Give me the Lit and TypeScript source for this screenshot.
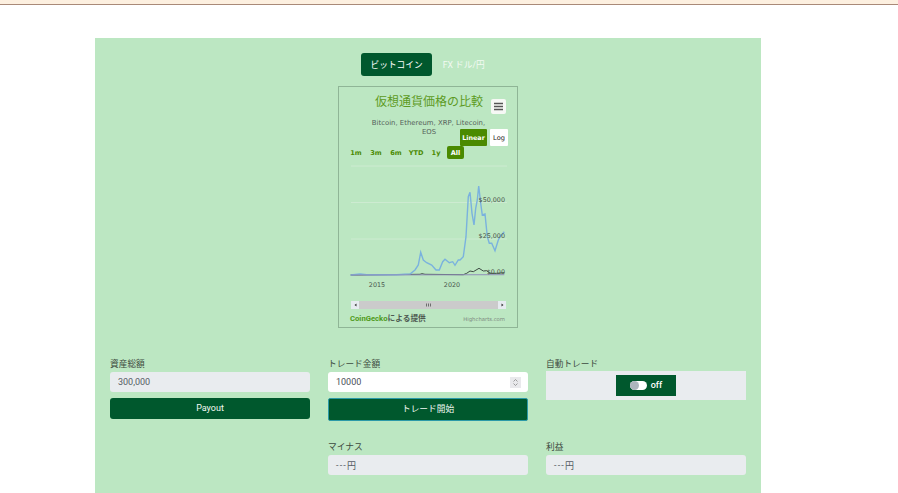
import { LitElement, html, css, svg, unsafeCSS } from "lit";
import { customElement } from "lit/decorators.js";

const JP = unsafeCSS(`"Roboto","Noto Sans CJK JP",sans-serif`);
const z = (p: number[][]) => p.map(([x, y]) => `${(x / 3 + 330 - 339).toFixed(1)},${(y / 3 + 160 - 87).toFixed(1)}`).join(" ");
const blue = z([[62,345],[90,342],[110,344],[200,344],[240,342],[255,330],[265,315],[272,277],[280,300],[290,308],[305,315],[318,330],[328,330],[338,305],[345,298],[358,308],[368,305],[375,316],[385,300],[390,300],[400,290],[408,230],[415,110],[420,97],[426,160],[432,195],[437,145],[442,120],[446,78],[452,130],[457,165],[465,162],[472,230],[478,250],[485,250],[495,272],[505,240],[510,230],[523,215]]);
const dark = z([[62,345],[270,343],[276,341],[285,343],[400,344],[410,340],[420,333],[430,335],[447,325],[460,333],[470,332],[480,340],[500,340],[523,338]]);
const purple = z([[62,345],[523,344]]);

@customElement("app-root")
export class AppRoot extends LitElement {
  static styles = css`
    :host { display: block; height: 493px; overflow: hidden; background: #fff; font-family: ${JP}; color: #3c4a40; }
    .top { height: 4px; background: #fdf0e0; border-bottom: 1px solid #a98a78; }
    .panel { margin: 33px 0 0 95px; width: 666px; height: 455px; background: #bce7c2; padding: 15px 15px 0; box-sizing: border-box; display: flex; flex-direction: column; align-items: center; }
    .tabs { align-self: flex-start; margin-left: 251px; display: flex; align-items: center; gap: 1px; height: 23px; font-size: 8.7px; color: #f2faf3; }
    .tab { padding: 0 9.5px; height: 23px; display: flex; align-items: center; border-radius: 3px; }
    .tab.on { background: #00582d; color: #fff; }
    .chart { display: block; width: 180px; height: 242px; margin-top: 10px; box-sizing: border-box; border: 1px solid #8fb596; flex: none; }
    .chart text { font-family: ${JP}; }
    .chart text.hc { font-family: "DejaVu Sans", ${JP}; }
    .grid { align-self: stretch; display: grid; grid-template-columns: repeat(3, 200px); column-gap: 18px; margin-top: 30px; font-size: 9px; }
    .col { display: flex; flex-direction: column; }
    .r2 { margin-top: 20px; }
    label { display: block; line-height: 12px; height: 12px; margin-bottom: 2px; font-size: 8.7px; color: #3c4a40; }
    .field { height: 20px; border-radius: 3px; background: #e9ecef; display: flex; align-items: center; padding: 0 8px; font-size: 9px; color: #555d64; box-sizing: border-box; }
    .field.white { background: #fff; justify-content: space-between; padding-right: 7px; color: #4a5058; }
    .blank { letter-spacing: 1.2px; }
    .spin { width: 11px; height: 11px; background: #e9e9ec; display: block; }
    .btn { margin-top: 6px; background: #00582d; color: #f2faf3; border-radius: 3px; height: 21px; display: flex; align-items: center; justify-content: center; font-size: 9px; box-sizing: border-box; padding-bottom: 2px; }
    .btn.focus { height: 23px; border: 1px solid #2c9aa8; border-radius: 2px; padding-bottom: 2px; font-size: 8.7px; }
    .auto { height: 29px; margin-top: -1px; background: #e9ecef; display: flex; align-items: center; justify-content: center; }
    .switch { width: 60px; height: 21px; background: #00582d; color: #fff; display: flex; align-items: center; justify-content: center; gap: 4px; font-size: 9px; font-weight: 500; padding-bottom: 1px; box-sizing: border-box; }
    .tog { width: 17px; height: 9px; border-radius: 5px; background: #fff; display: flex; align-items: center; }
    .knob { width: 9px; height: 9px; border-radius: 50%; background: #adb5bd; }
  `;

  private chart() {
    const lbl = (x: number, t: string, on = false) => svg`<text class="hc" x=${x} y="68" font-size="6.6" font-weight="700" text-anchor="middle" fill=${on ? "#fff" : "#4a8a00"}>${t}</text>`;
    const ax = (y: number, t: string) => svg`<text class="hc" x="166" y=${y} font-size="6.4" text-anchor="end" fill="#4a554d">${t}</text>`;
    return svg`<svg class="chart" viewBox="0 0 178 240" xmlns="http://www.w3.org/2000/svg">
      <text x="90" y="19" font-size="12" text-anchor="middle" fill="#5d9a22">仮想通貨価格の比較</text>
      <rect x="152" y="12" width="15" height="15" rx="2" fill="#f6f8f5"/>
      <path d="M155 16.500h9M155 19.500h9M155 22.500h9" stroke="#555" stroke-width="1.6"/>
      <text class="hc" x="89.500" y="38" font-size="6.900" text-anchor="middle" fill="#55625a">Bitcoin, Ethereum, XRP, Litecoin,</text>
      <text class="hc" x="90" y="47" font-size="6.900" text-anchor="middle" fill="#55625a">EOS</text>
      <rect x="121" y="42" width="27" height="17" rx="1" fill="#4a8a00"/>
      <text class="hc" x="134.500" y="53" font-size="6.400" font-weight="700" text-anchor="middle" fill="#fff">Linear</text>
      <rect x="151" y="42" width="18" height="17" rx="1" fill="#fff"/>
      <text class="hc" x="160" y="53" font-size="6.600" text-anchor="middle" fill="#222">Log</text>
      ${lbl(17, "1m")}${lbl(37, "3m")}${lbl(57, "6m")}${lbl(77, "YTD")}${lbl(97, "1y")}
      <rect x="108" y="59" width="17" height="13" rx="2" fill="#4a8a00"/>${lbl(116.500, "All", true)}
      <path d="M12 79H168M12 115.500H168M12 152H168" stroke="#cdebd1" stroke-width="1"/>
      <polyline points=${dark} fill="none" stroke="#3d4a42" stroke-width="1"/>
      <polyline points=${blue} fill="none" stroke="#7ab2de" stroke-width="1.400"/>
      <polyline points=${purple} fill="none" stroke="#8f8fb8" stroke-width="1"/>
      ${ax(115, "$50,000")}${ax(151, "$25,000")}${ax(187, "$0.00")}
      <text class="hc" x="38" y="200" font-size="6.400" text-anchor="middle" fill="#4a554d">2015</text>
      <text class="hc" x="113" y="200" font-size="6.400" text-anchor="middle" fill="#4a554d">2020</text>
      <rect x="12" y="214" width="155" height="8" fill="#cbcbcb"/>
      <rect x="12" y="214" width="8" height="8" fill="#e6ebf0"/><rect x="159" y="214" width="8" height="8" fill="#e6ebf0"/>
      <path d="M17.500 216.500l-2 1.500 2 1.500zM162.500 216.500l2 1.500-2 1.500z" fill="#333"/>
      <path d="M87.500 216.500v3M89.500 216.500v3M91.500 216.500v3" stroke="#555" stroke-width=".8"/>
      <text x="11" y="234" font-size="7.700" font-weight="700" fill="#4f5a52"><tspan fill="#4f9a1a">CoinGecko</tspan>による提供</text>
      <text class="hc" x="166" y="234" font-size="5.300" text-anchor="end" fill="#7c8a80">Highcharts.com</text>
    </svg>`;
  }

  render() {
    return html`
      <div class="top"></div>
      <div class="panel">
        <div class="tabs"><div class="tab on">ビットコイン</div><div class="tab">FX ドル/円</div></div>
        ${this.chart()}
        <div class="grid">
          <div class="col"><label>資産総額</label><div class="field">300,000</div><div class="btn">Payout</div></div>
          <div class="col"><label>トレード金額</label>
            <div class="field white">10000<svg class="spin" viewBox="0 0 11 11"><path d="M3.500 4.500l2-2 2 2M3.500 6.500l2 2 2-2" fill="none" stroke="#888" stroke-width=".8"/></svg></div>
            <div class="btn focus">トレード開始</div></div>
          <div class="col"><label>自動トレード</label>
            <div class="auto"><div class="switch"><span class="tog"><span class="knob"></span></span>off</div></div></div>
          <div class="col r2"></div>
          <div class="col r2"><label>マイナス</label><div class="field"><span class="blank">---</span>円</div></div>
          <div class="col r2"><label>利益</label><div class="field"><span class="blank">---</span>円</div></div>
        </div>
      </div>`;
  }
}
